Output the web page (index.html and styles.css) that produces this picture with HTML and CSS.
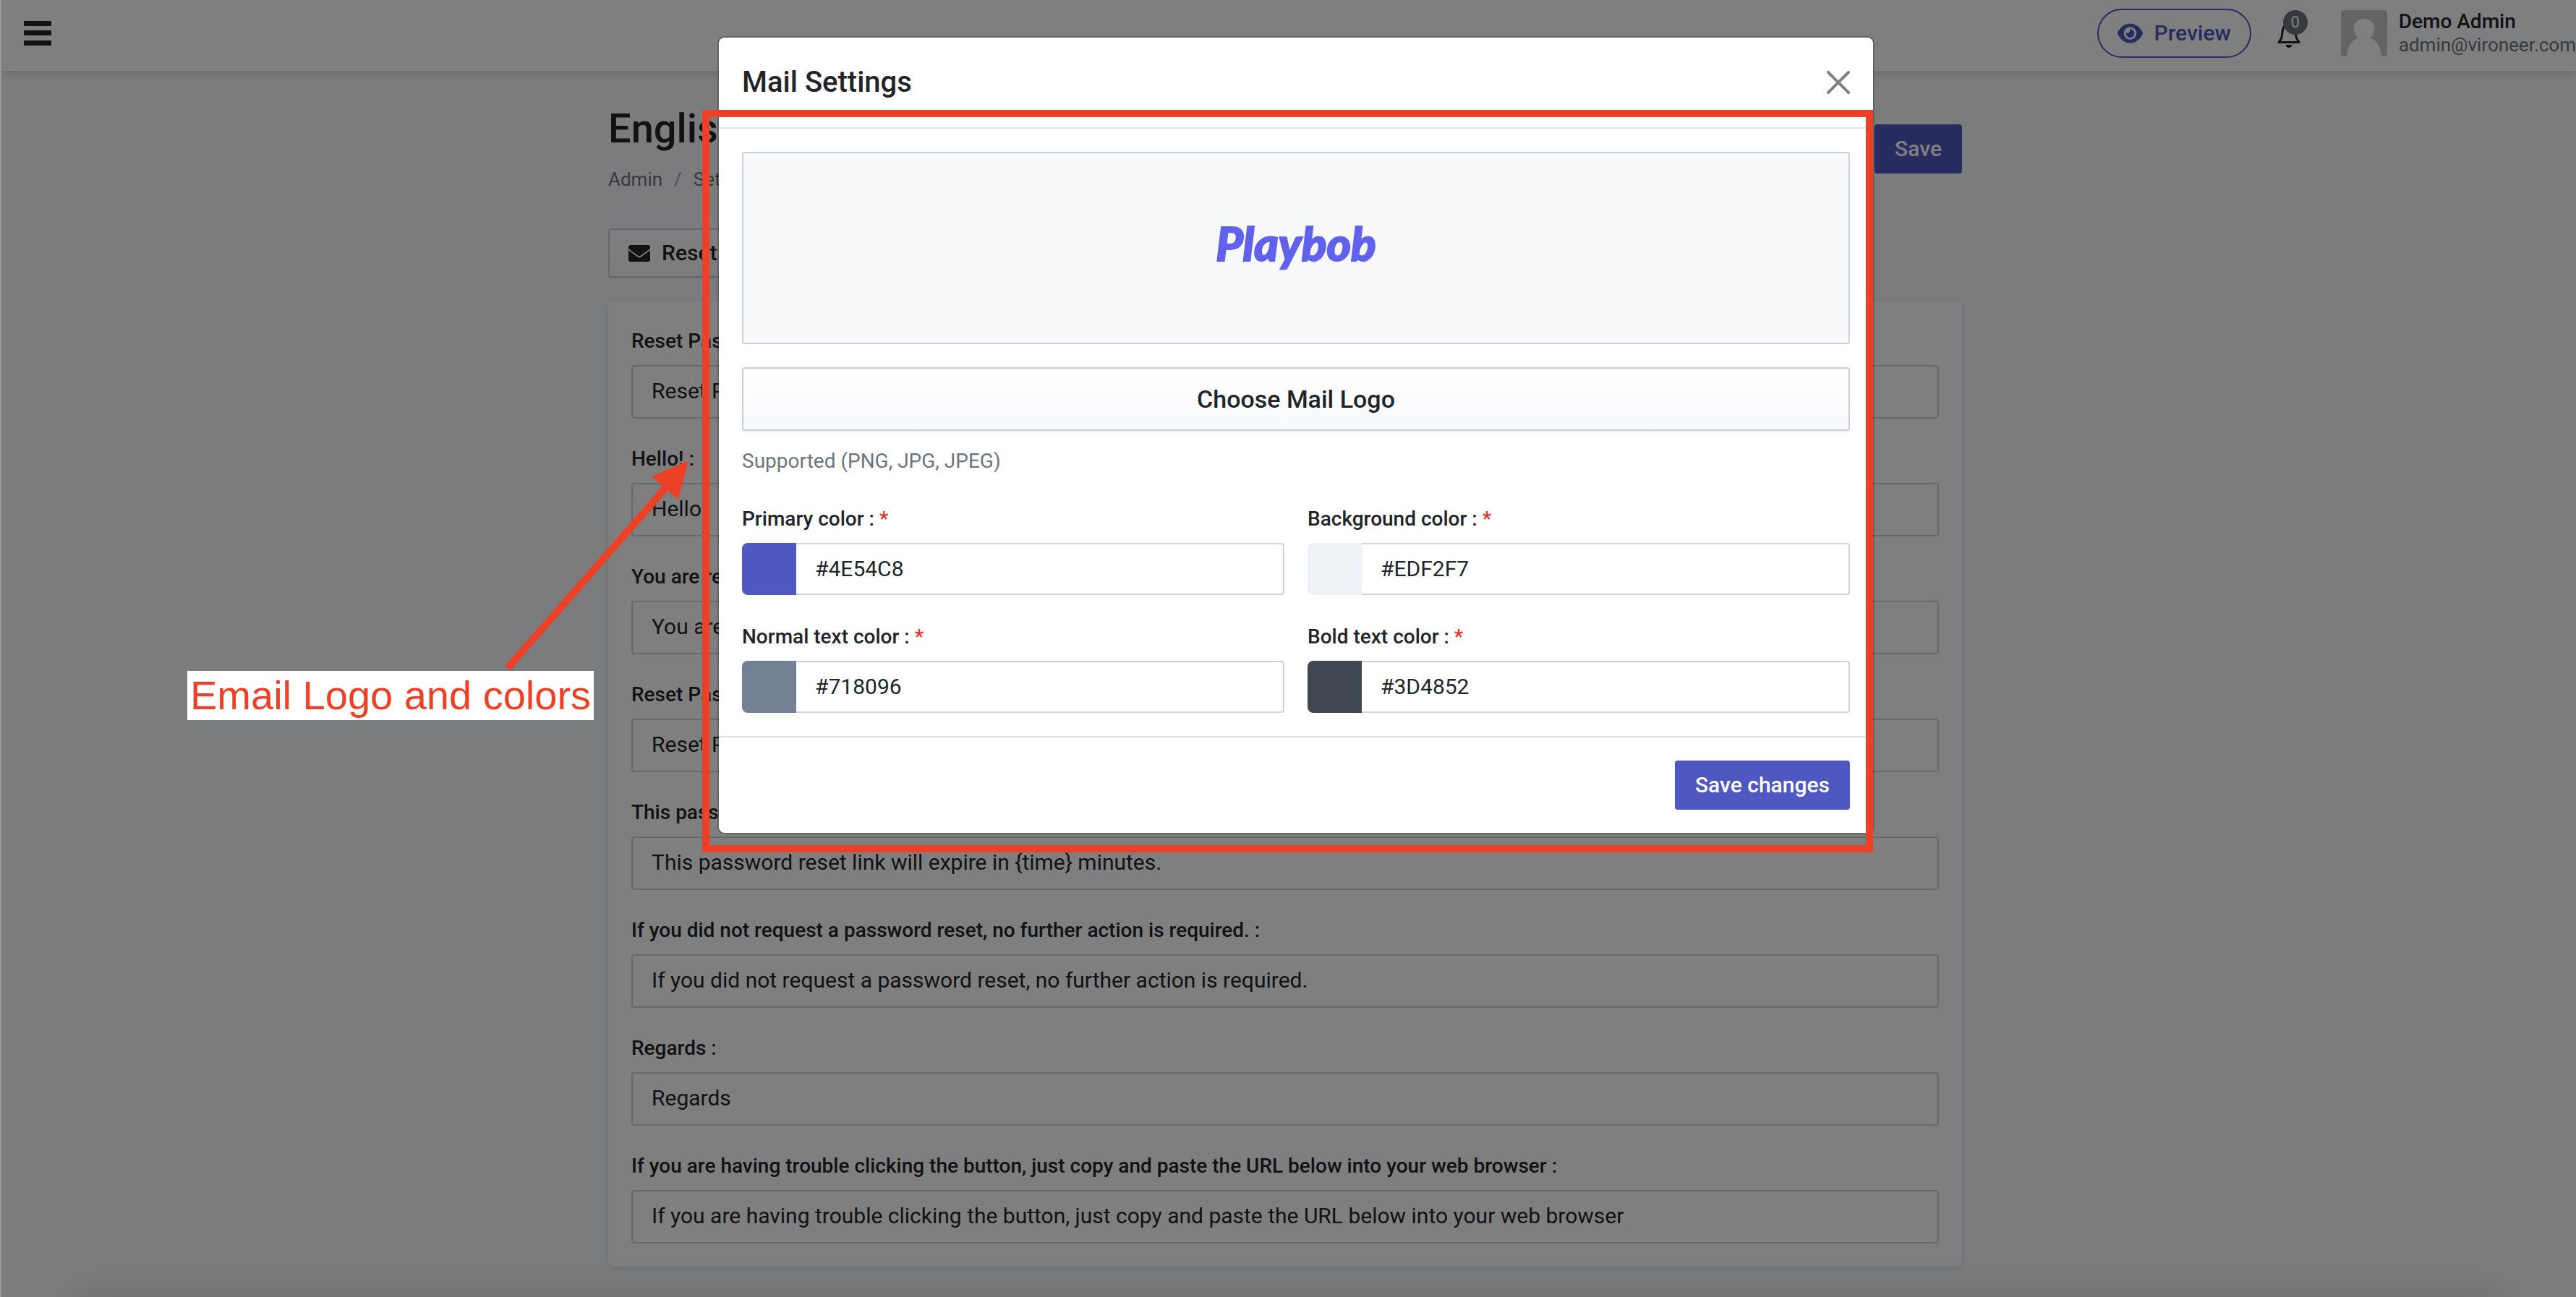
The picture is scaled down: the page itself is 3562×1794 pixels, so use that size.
FILE: index.html
```html
<!DOCTYPE html>
<html lang="en">
<head>
<meta charset="utf-8">
<title>Mail Settings</title>
<link rel="stylesheet" href="styles.css">
</head>
<body>
<div class="app">
  <header class="topbar">
    <button class="icon-button" type="button" aria-label="Toggle menu">
      <svg class="icon-menu" viewBox="0 0 38 34"><rect y="0" width="38" height="7" rx="1"/><rect y="13" width="38" height="7" rx="1"/><rect y="27" width="38" height="7" rx="1"/></svg>
    </button>
    <div class="topbar-end">
      <a class="preview-link" href="#">
        <svg class="icon-eye" viewBox="0 0 576 512"><path d="M288 32c-80.800 0-145.500 36.800-192.600 80.600C48.600 156 17.300 208 2.500 243.700c-3.300 7.900-3.300 16.700 0 24.600C17.300 304 48.600 356 95.400 399.400C142.500 443.200 207.200 480 288 480s145.500-36.800 192.600-80.600c46.800-43.500 78.100-95.400 93-131.100c3.300-7.900 3.300-16.700 0-24.600c-14.900-35.700-46.200-87.700-93-131.100C433.500 68.800 368.800 32 288 32zM432 256a144 144 0 1 1-288 0a144 144 0 1 1 288 0zM288 192c0 35.300-28.700 64-64 64c-11.500 0-22.300-3-31.600-8.400c-.2 2.800-.4 5.500-.4 8.400c0 53 43 96 96 96s96-43 96-96s-43-96-96-96c-2.800 0-5.600 .1-8.400 .4c5.300 9.300 8.400 20.100 8.400 31.600z"/></svg>
        <span>Preview</span>
      </a>
      <button class="icon-button bell" type="button" aria-label="Notifications">
        <svg class="icon-bell" viewBox="0 0 32 40"><path class="line" d="M16 2v4M2 32.500h28c-4-5-4.500-8-5-14C24.500 11 21 6.500 16 6.500S7.500 11 7 18.500c-.5 6-1 9-5 14z" stroke-width="3" stroke-linejoin="round"/><path d="M11.500 36h9a4.500 4 0 0 1-9 0z"/></svg>
        <span class="badge">0</span>
      </button>
      <a class="account" href="#">
        <svg class="avatar" viewBox="0 0 64 64"><rect width="64" height="64" rx="4" class="avatar-bg"/><ellipse cx="32" cy="26" rx="14.500" ry="14"/><path d="M8 64C9 48 18 38 27 38h10c9 0 18 10 19 26z"/></svg>
        <span class="account-text"><strong>Demo Admin</strong><span>admin@vironeer.com</span></span>
      </a>
    </div>
  </header>

  <main class="content">
    <div class="page-head">
      <div>
        <h1>English</h1>
        <nav class="breadcrumb" aria-label="Breadcrumb"><a href="#">Admin</a><span class="slash">/</span><a href="#">Settings</a></nav>
      </div>
      <button class="button primary" type="button">Save</button>
    </div>
    <button class="button outline" type="button">
      <svg class="icon-mail" viewBox="0 0 30 23"><path d="M3 0h24a3 3 0 0 1 3 3v2L17 14.500q-2 1.500-4 0L0 5V3a3 3 0 0 1 3-3zM0 7l12 9q3 2 6 0l12-9v13a3 3 0 0 1-3 3H3a3 3 0 0 1-3-3z"/></svg>
      <span>Reset Password</span>
    </button>
    <form class="card">
      <div class="field"><label for="f1">Reset Password Notification :</label><input id="f1" type="text" value="Reset Password Notification"></div>
      <div class="field"><label for="f2">Hello! :</label><input id="f2" type="text" value="Hello!"></div>
      <div class="field"><label for="f3">You are receiving this email because we received a password reset request for your account. :</label><input id="f3" type="text" value="You are receiving this email"></div>
      <div class="field"><label for="f4">Reset Password :</label><input id="f4" type="text" value="Reset Password"></div>
      <div class="field"><label for="f5">This password reset link will expire in {time} minutes. :</label><input id="f5" type="text" value="This password reset link will expire in {time} minutes."></div>
      <div class="field"><label for="f6">If you did not request a password reset, no further action is required. :</label><input id="f6" type="text" value="If you did not request a password reset, no further action is required."></div>
      <div class="field"><label for="f7">Regards :</label><input id="f7" type="text" value="Regards"></div>
      <div class="field"><label for="f8">If you are having trouble clicking the button, just copy and paste the URL below into your web browser :</label><input id="f8" type="text" value="If you are having trouble clicking the button, just copy and paste the URL below into your web browser"></div>
    </form>
  </main>
</div>

<div class="backdrop">
  <div class="modal" role="dialog" aria-labelledby="modal-title">
    <div class="modal-head">
      <h2 id="modal-title">Mail Settings</h2>
      <button class="icon-button" type="button" aria-label="Close">
        <svg class="icon-close" viewBox="0 0 32 32"><path class="line" d="M2 2l28 28M30 2L2 30" stroke-width="4" stroke-linecap="round"/></svg>
      </button>
    </div>
    <div class="modal-body">
      <div class="logo-box"><span class="logo">Playbob</span></div>
      <button class="button choose" type="button">Choose Mail Logo</button>
      <p class="hint">Supported (PNG, JPG, JPEG)</p>
      <div class="colors">
        <div class="field"><label for="c1">Primary color : <span class="req">*</span></label><div class="color-input"><span class="swatch primary-swatch"></span><input id="c1" type="text" value="#4E54C8"></div></div>
        <div class="field"><label for="c2">Background color : <span class="req">*</span></label><div class="color-input"><span class="swatch background-swatch"></span><input id="c2" type="text" value="#EDF2F7"></div></div>
        <div class="field"><label for="c3">Normal text color : <span class="req">*</span></label><div class="color-input"><span class="swatch normal-swatch"></span><input id="c3" type="text" value="#718096"></div></div>
        <div class="field"><label for="c4">Bold text color : <span class="req">*</span></label><div class="color-input"><span class="swatch bold-swatch"></span><input id="c4" type="text" value="#3D4852"></div></div>
      </div>
    </div>
    <div class="modal-foot"><button class="button primary" type="button">Save changes</button></div>
  </div>
</div>

<div class="mark-frame"></div>
<svg class="mark-arrow" viewBox="0 0 260 300"><path d="M7 289L228 37"/><path class="head" d="M257 2L206 24L243 56z"/></svg>
<div class="mark-note">Email Logo and colors</div>
</body>
</html>
```
FILE: styles.css
```css
* { box-sizing: border-box; }

body {
  margin: 0;
  min-height: 100vh;
  position: relative;
  overflow: hidden;
  border-left: 2px solid #999;
  background: #f7f9fb;
  color: #212529;
  font: 400 30px/44px Roboto, "Liberation Sans", sans-serif;
}

/* Soft shade along the bottom edge of the window */
body::after {
  content: "";
  position: absolute;
  left: 120px;
  right: 120px;
  bottom: 0;
  box-shadow: 0 20px 60px 20px rgba(0, 0, 0, .15);
}

h1, h2, p { margin: 0; }
h1, h2 { font-weight: 500; }
a { color: inherit; text-decoration: none; }
svg { display: block; fill: currentColor; }
.line { fill: none; stroke: currentColor; }
button, input { font: inherit; color: inherit; }

.topbar {
  height: 98px;
  padding: 0 0 6px 31px;
  display: flex;
  align-items: center;
  justify-content: space-between;
  background: #fff;
  box-shadow: 0 0 16px rgba(0, 0, 0, .25);
}
.topbar-end { display: flex; align-items: center; white-space: nowrap; }
.icon-button { position: relative; padding: 0; border: 0; background: none; }
.icon-menu { width: 38px; height: 34px; }
.preview-link {
  height: 68px;
  padding: 0 26px;
  display: flex;
  align-items: center;
  gap: 16px;
  border: 2px solid #4e58c0;
  border-radius: 34px;
  color: #4e58c0;
  font-weight: 500;
}
.icon-eye { width: 35px; height: 32px; }
.bell { margin: 0 56px 0 36px; }
.icon-bell { width: 32px; height: 40px; }
.badge {
  position: absolute;
  left: 8px;
  top: -12px;
  width: 34px;
  height: 34px;
  border-radius: 50%;
  background: #6c757d;
  color: #fff;
  font-size: 22px;
  line-height: 34px;
}
.account { display: flex; align-items: center; gap: 16px; }
.avatar { width: 64px; height: 64px; fill: #fff; }
.avatar-bg { fill: #c8c8c8; }
.account-text { display: flex; flex-direction: column; font-size: 26px; line-height: 32px; color: #6c757d; }
.account-text strong { font-size: 28px; font-weight: 500; color: #212529; }

.content {
  width: 100%;
  max-width: 1882px;
  margin: 0 auto;
  padding: 46px 10px 42px 0;
}
.page-head { display: flex; align-items: center; justify-content: space-between; margin-bottom: 48px; }
h1 { font-size: 56px; line-height: 68px; }
.breadcrumb { display: flex; gap: 16px; margin-top: 16px; font-size: 26px; line-height: 40px; color: #6c757d; }
.slash { color: #a0a7ad; }

.button {
  height: 68px;
  padding: 0 28px;
  display: flex;
  align-items: center;
  justify-content: center;
  border: 0;
  border-radius: 4px;
  font-weight: 500;
}
.primary { background: #4e58c0; color: #fff; }
.outline, .choose {
  border: 2px solid #c8ced8;
  background: linear-gradient(#fff, #f8f9fb);
  box-shadow: 0 2px 2px rgba(0, 0, 0, .06);
}
.outline { gap: 16px; padding: 0 26px; margin-bottom: 32px; }
.icon-mail { width: 30px; height: 23px; }

.card {
  padding: 35px 32px 32px;
  display: grid;
  gap: 35px;
  border-radius: 8px;
  background: #fff;
  box-shadow: 0 2px 8px rgba(0, 0, 0, .12);
}
.field label { display: block; margin-bottom: 12px; font-size: 28px; line-height: 42px; font-weight: 500; }
input {
  display: block;
  width: 100%;
  height: 74px;
  padding: 0 26px 4px;
  border: 2px solid #ced4da;
  border-radius: 4px;
  background: #fff;
  outline: 0;
}

.backdrop {
  position: absolute;
  inset: 0 -20px 0 0;
  padding: 50px 32px;
  background: rgba(0, 0, 0, .5);
}
.modal {
  max-width: 1600px;
  margin: 0 auto;
  border: 2px solid rgba(0, 0, 0, .2);
  border-radius: 10px;
  background: #fff;
  background-clip: padding-box;
}
.modal-head {
  padding: 32px;
  display: flex;
  align-items: center;
  justify-content: space-between;
  border-bottom: 2px solid #dee2e6;
}
h2 { font-size: 40px; line-height: 60px; }
.icon-close { width: 32px; height: 32px; color: #808080; }
.modal-body { padding: 32px; }
.logo-box {
  height: 266px;
  padding-bottom: 12px;
  display: grid;
  place-items: center;
  border: 2px solid #c8d0da;
  border-radius: 4px;
  background: #f8f9fb;
}
.logo {
  color: #6062ee;
  font: italic 900 64px/72px Lato, "Open Sans", sans-serif;
  -webkit-text-stroke: 2px currentColor;
}
.choose { width: 100%; height: 88px; margin: 32px 0 21px; font-size: 34px; }
.hint { font-size: 28px; line-height: 42px; color: #6c757d; }
.colors { display: grid; grid-template-columns: 1fr 1fr; gap: 37px 32px; margin-top: 38px; }
.req { color: #ec2c20; }
.color-input { display: flex; }
.color-input input { height: 72px; border-left: 0; border-radius: 0 4px 4px 0; padding-bottom: 2px; }
.swatch { flex: 0 0 75px; border-radius: 8px 0 0 8px; }
.primary-swatch { background: #4e58c0; }
.background-swatch { background: #eef2f7; }
.normal-swatch { background: #748194; }
.bold-swatch { background: #3f4851; }
.modal-foot { padding: 32px; display: flex; justify-content: flex-end; border-top: 2px solid #dee2e6; }

/* Annotations lie over the page */
.mark-frame { position: absolute; left: 969px; top: 152px; width: 1619px; height: 1027px; border: 10px solid #ec4126; }
.mark-arrow { position: absolute; left: 693px; top: 635px; width: 260px; height: 300px; fill: none; stroke: #ec4126; stroke-width: 10; }
.mark-arrow .head { fill: #ec4126; stroke: none; }
.mark-note {
  position: absolute;
  left: 257px;
  top: 928px;
  padding: 0 4px;
  background: #fff;
  color: #ec4126;
  font: 56px/68px "Liberation Sans", Arial, sans-serif;
  white-space: nowrap;
}
```
